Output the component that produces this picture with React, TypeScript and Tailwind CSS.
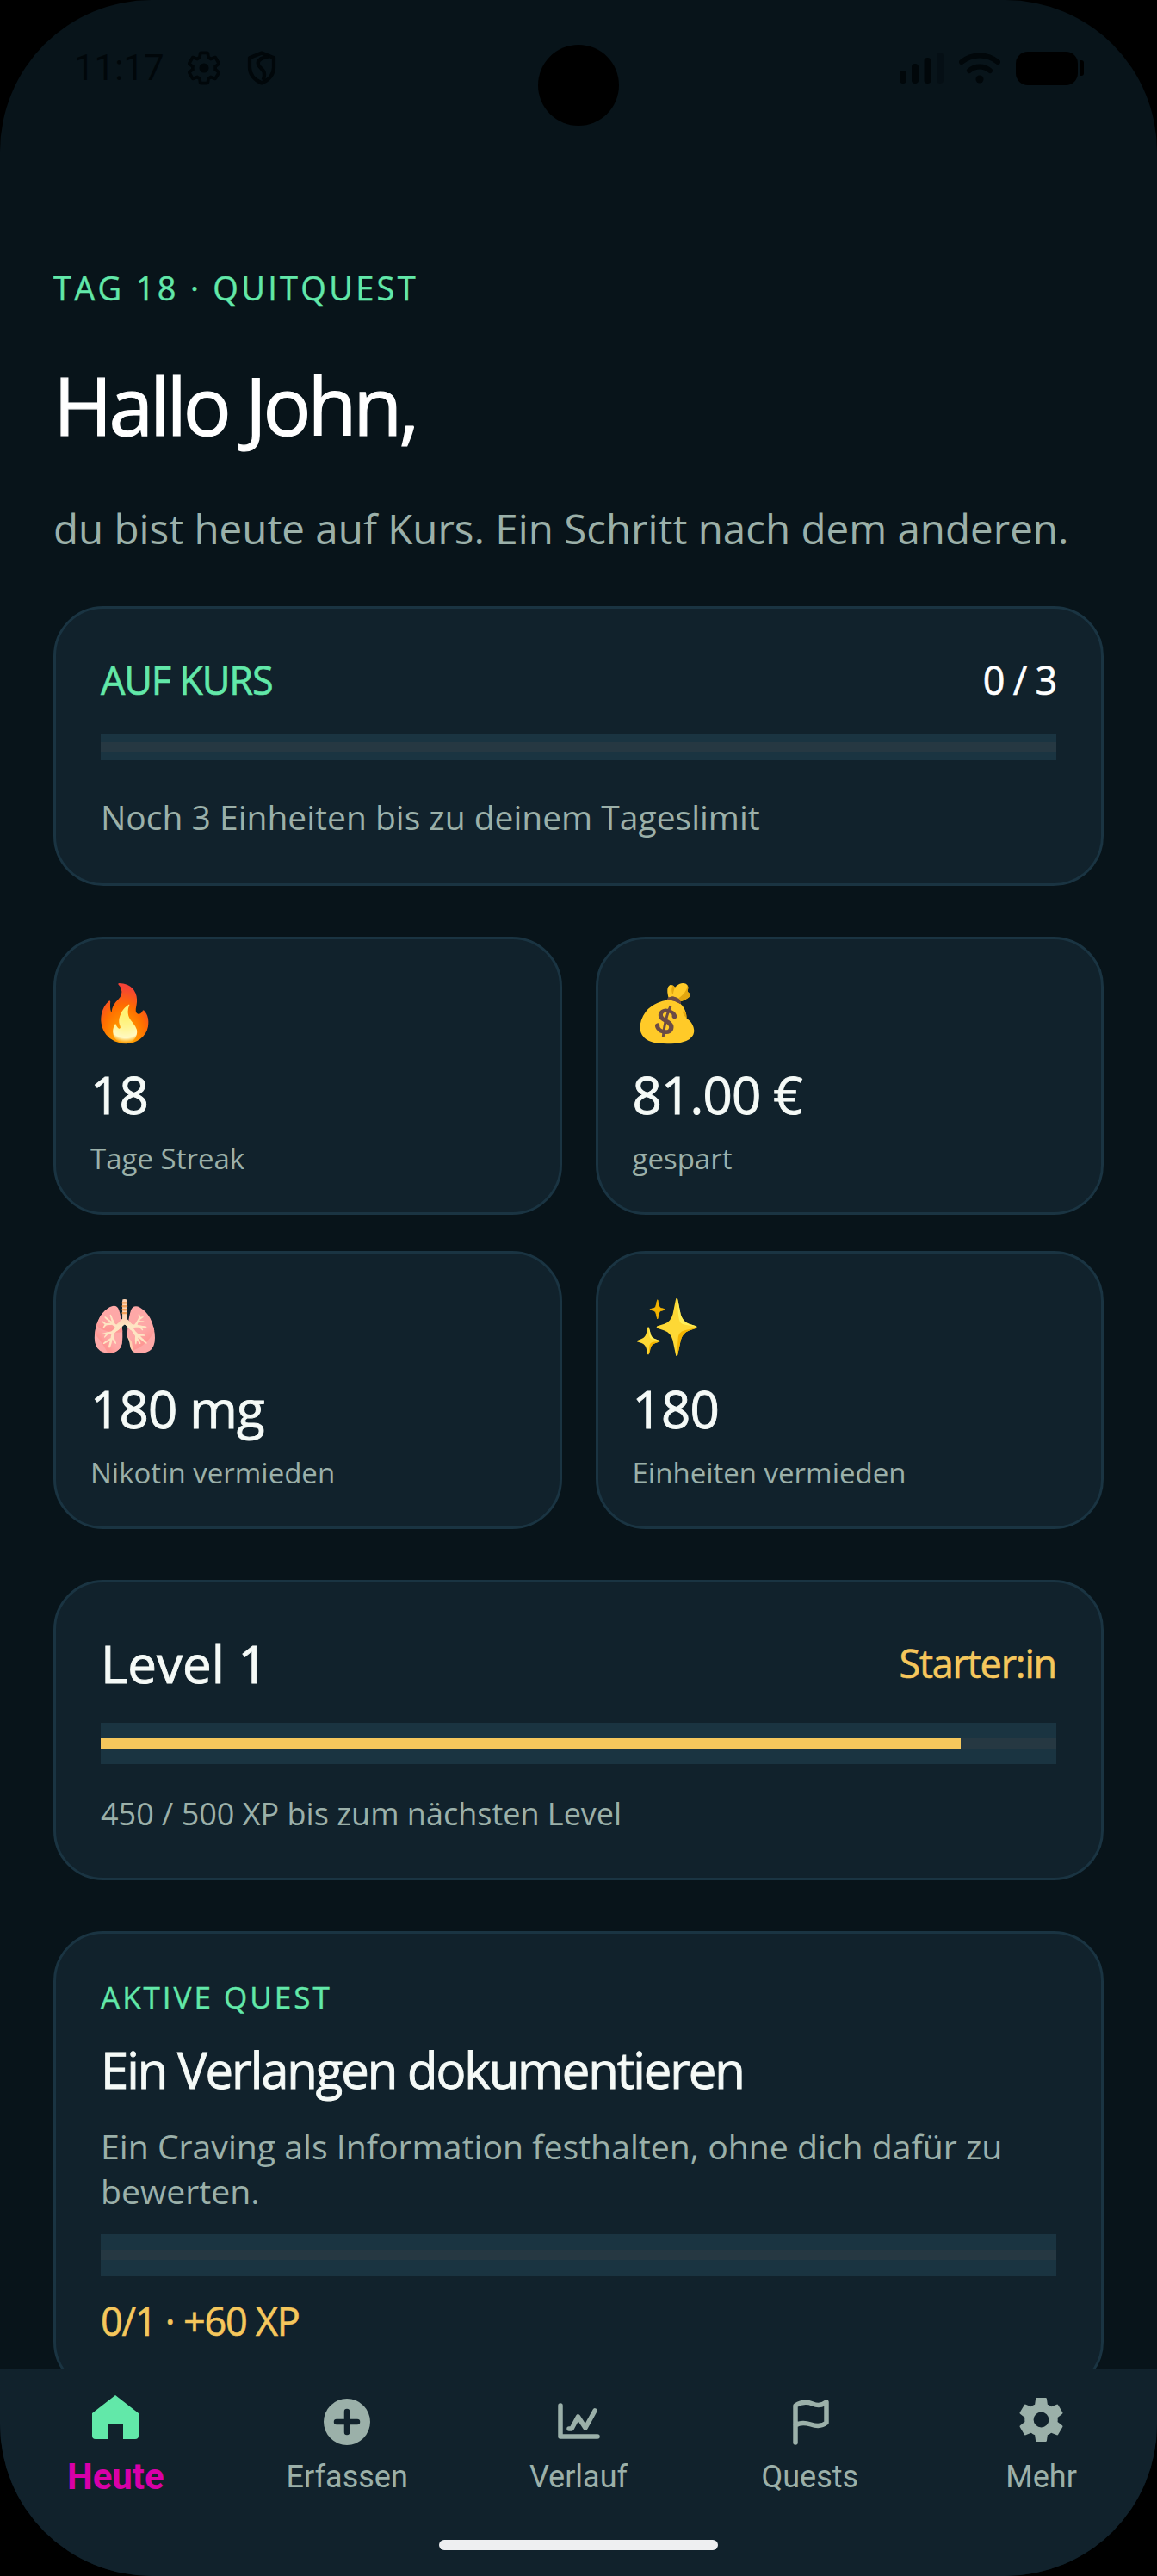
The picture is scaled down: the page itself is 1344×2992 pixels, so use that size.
import { IoSettingsSharp } from "react-icons/io5";

const sans = "font-['Open_Sans','Noto_Sans',sans-serif]";

function Card({ className, children }: { className: string; children: React.ReactNode }) {
  return (
    <div className={`rounded-[58px] border-[3px] border-[#1a3442] bg-[#11222c] ${className}`}>
      {children}
    </div>
  );
}

function Bar({ className, fill, fillClass }: { className: string; fill: number; fillClass: string }) {
  return (
    <div className={`flex items-center bg-[#1a3441] ${className}`}>
      <div className="h-[12px] w-full bg-[#263842]">
        <div className={`h-full ${fillClass}`} style={{ width: `${fill}%` }} />
      </div>
    </div>
  );
}

function Stat({ icon, value, label }: { icon: string; value: string; label: string }) {
  return (
    <Card className="h-[323px] pl-[40px] pt-[42px]">
      <div className="h-[84px] text-[64px] leading-[84px]">{icon}</div>
      <div className="mt-[14px] text-[60px] font-medium leading-[80px] tracking-[-0.800px] text-[#f5faf7] [-webkit-text-stroke:0.9px_currentColor]">{value}</div>
      <div className="mt-[12px] text-[33px] leading-[46px] text-[#9bb0a9]">{label}</div>
    </Card>
  );
}

function StatusBar() {
  return (
    <div className="flex h-[160px] items-start justify-between pl-[86px] pr-[85px] pt-[54px]">
      <div className="flex h-[50px] items-center gap-[24px]">
        <span className="font-['Roboto',sans-serif] text-[42px] leading-[50px] text-[#01070a]">11:17</span>
        <svg viewBox="0 0 24 24" className="h-[44px] w-[44px]" fill="none" stroke="#01070a" strokeWidth="2">
          <path d="M19.140 12.940c.04-.3.06-.61.06-.94 0-.32-.02-.64-.07-.94l2.030-1.580c.18-.14.23-.41.12-.61l-1.920-3.320c-.12-.22-.37-.29-.59-.22l-2.390.96c-.5-.38-1.030-.7-1.620-.94l-.36-2.540c-.04-.24-.24-.41-.48-.41h-3.840c-.24 0-.43.17-.47.41l-.36 2.540c-.59.24-1.130.57-1.620.94l-2.390-.96c-.22-.08-.47 0-.59.22L2.740 8.870c-.12.21-.08.47.12.61l2.030 1.580c-.05.3-.09.63-.09.94s.02.64.07.94l-2.030 1.580c-.18.14-.23.41-.12.61l1.920 3.320c.12.22.37.29.59.22l2.390-.96c.5.38 1.030.7 1.620.94l.36 2.540c.05.24.24.41.48.41h3.840c.24 0 .44-.17.47-.41l.36-2.540c.59-.24 1.130-.56 1.620-.94l2.390.96c.22.08.47 0 .59-.22l1.920-3.320c.12-.22.07-.47-.12-.61z" />
          <circle cx="12" cy="12" r="3" fill="#01070a" stroke="none" />
        </svg>
        <svg viewBox="0 0 24 24" className="h-[42px] w-[42px]" fill="none" stroke="#01070a" strokeWidth="2.400" strokeLinejoin="round">
          <path d="M12 2l8 3.200v6.300c0 4.800-3.300 8.300-8 10.500-4.700-2.200-8-5.700-8-10.500V5.200z" />
          <path d="M16.500 5C11 4.500 8 8 10.500 11c2 2.500 4.500 3 2.500 9" />
        </svg>
      </div>
      <div className="flex h-[50px] items-center gap-[18px]">
        <svg viewBox="0 0 51 37" className="h-[37px] w-[51px]" fill="#01070a">
          <rect x="0" y="21" width="8" height="15" rx="4" />
          <rect x="14" y="13" width="8" height="23" rx="4" />
          <rect x="28.500" y="6" width="8" height="30" rx="4" />
          <rect x="43" y="0" width="8" height="36" rx="4" fillOpacity="0.3" />
        </svg>
        <svg viewBox="0 0 48 37" className="h-[37px] w-[48px]" fill="none" stroke="#01070a" strokeWidth="6" strokeLinecap="round">
          <path d="M3 11C15 1 33 1 45 11" />
          <path d="M12 21C19 15 29 15 36 21" />
          <circle cx="24" cy="31" r="4.500" fill="#01070a" stroke="none" />
        </svg>
        <div className="flex items-center gap-[3px]">
          <div className="h-[39px] w-[72px] rounded-[14px] bg-black" />
          <div className="h-[18px] w-[4px] rounded-r-[3px] bg-black" />
        </div>
      </div>
    </div>
  );
}

function NavItem({ icon, label, active }: { icon: React.ReactNode; label: string; active?: boolean }) {
  return (
    <div className="flex flex-1 flex-col items-center">
      <div className="flex h-[66px] w-[66px] items-center justify-center">{icon}</div>
      <span
        className={`mt-[7px] font-['Roboto',sans-serif] leading-[48px] ${
          active ? "text-[42px] font-bold text-[#d800a8]" : "text-[36px] text-[#9bb0a9]"
        }`}
      >
        {label}
      </span>
    </div>
  );
}

function BottomNav() {
  return (
    <div className="absolute inset-x-0 bottom-0 h-[240px] bg-[#11222c] pt-[28px]">
      <div className="flex">
        <NavItem
          active
          label="Heute"
          icon={
            <svg viewBox="0 0 66 66" className="h-[66px] w-[66px]" fill="#62e8a9">
              <path d="M33 2L60 23V49Q60 53 56 53H42V35H24V53H10Q6 53 6 49V23Z" />
            </svg>
          }
        />
        <NavItem
          label="Erfassen"
          icon={
            <svg viewBox="0 0 54 54" className="h-[54px] w-[54px]">
              <circle cx="27" cy="27" r="27" fill="#9bb0a9" />
              <path d="M27 15V39M15 27H39" stroke="#11222c" strokeWidth="6.500" strokeLinecap="round" />
            </svg>
          }
        />
        <NavItem
          label="Verlauf"
          icon={
            <svg viewBox="0 0 66 66" className="h-[66px] w-[66px]" fill="none" stroke="#9bb0a9" strokeWidth="5.500" strokeLinecap="round" strokeLinejoin="round">
              <path d="M12 14V50H55" />
              <path d="M22 41L25 41L32.500 27L41 40L52 20" />
            </svg>
          }
        />
        <NavItem
          label="Quests"
          icon={
            <svg viewBox="0 0 66 66" className="h-[66px] w-[66px]" fill="none" stroke="#9bb0a9" strokeWidth="5.500" strokeLinecap="round" strokeLinejoin="round">
              <path d="M16 57V14C24 9 31 10 36 12S47 14 52 10V34C46 39 40 38 34 36S22 33 16 37" />
            </svg>
          }
        />
        <NavItem label="Mehr" icon={<IoSettingsSharp className="h-[57px] w-[57px] -translate-y-[3px] text-[#9bb0a9]" />} />
      </div>
      <div className="absolute bottom-[30px] left-[510px] h-[12px] w-[324px] rounded-[6px] bg-[#eeeff1]" />
    </div>
  );
}

export default function App() {
  return (
    <div className="min-h-[2992px] bg-black">
      <div className={`relative h-[2992px] overflow-hidden rounded-[176px] bg-[#08141a] ${sans}`}>
        <div className="absolute left-[625px] top-[52px] h-[94px] w-[94px] rounded-full bg-black" />
        <StatusBar />

        <div className="px-[62px]">
          <div className="mt-[149px] text-[38px] font-medium leading-[50px] tracking-[3.300px] text-[#62e8a9] [-webkit-text-stroke:0.4px_currentColor]">
            TAG 18 · QUITQUEST
          </div>
          <h1 className="mt-[53px] text-[93px] font-medium leading-[116px] tracking-[-4.100px] text-white [-webkit-text-stroke:1.2px_currentColor]">Hallo John,</h1>
          <p className="mt-[54px] text-[47.500px] leading-[64px] text-[#9bb0a9]">
            du bist heute auf Kurs. Ein Schritt nach dem anderen.
          </p>

          <Card className="mt-[58px] h-[325px] px-[52px] pt-[54px]">
            <div className="flex items-center justify-between">
              <span className="text-[45px] font-medium leading-[58px] tracking-[-1.200px] text-[#62e8a9] [-webkit-text-stroke:0.6px_currentColor]">AUF KURS</span>
              <span className="text-[45px] font-medium leading-[58px] tracking-[-1.200px] text-white [-webkit-text-stroke:0.6px_currentColor]">0 / 3</span>
            </div>
            <Bar className="mt-[34px] h-[30px]" fill={0} fillClass="bg-[#62e8a9]" />
            <p className="mt-[39px] text-[39px] leading-[54px] text-[#9bb0a9]">Noch 3 Einheiten bis zu deinem Tageslimit</p>
          </Card>

          <div className="mt-[59px] grid grid-cols-2 gap-x-[39px] gap-y-[42px]">
            <Stat icon="🔥" value="18" label="Tage Streak" />
            <Stat icon="💰" value="81.00 €" label="gespart" />
            <Stat icon="🫁" value="180 mg" label="Nikotin vermieden" />
            <Stat icon="✨" value="180" label="Einheiten vermieden" />
          </div>

          <Card className="mt-[59px] h-[349px] px-[52px] pt-[54px]">
            <div className="flex items-center justify-between">
              <span className="text-[60px] font-medium leading-[80px] text-[#f5faf7] [-webkit-text-stroke:0.9px_currentColor]">Level 1</span>
              <span className="text-[45px] font-medium leading-[58px] tracking-[-1.200px] text-[#f5c75c] [-webkit-text-stroke:0.6px_currentColor]">Starter:in</span>
            </div>
            <Bar className="mt-[29px] h-[48px]" fill={90} fillClass="bg-[#f5c75c]" />
            <p className="mt-[33px] text-[36px] leading-[50px] text-[#9bb0a9]">450 / 500 XP bis zum nächsten Level</p>
          </Card>

          <Card className="mt-[59px] h-[535px] px-[52px] pt-[50px]">
            <div className="text-[35px] font-medium leading-[48px] tracking-[3px] text-[#62e8a9] [-webkit-text-stroke:0.4px_currentColor]">AKTIVE QUEST</div>
            <h2 className="mt-[22px] text-[58px] font-medium leading-[76px] tracking-[-2.100px] text-[#f5faf7] [-webkit-text-stroke:0.9px_currentColor]">Ein Verlangen dokumentieren</h2>
            <p className="mt-[25px] text-[39.200px] leading-[52px] text-[#9bb0a9]">
              Ein Craving als Information festhalten, ohne dich dafür zu bewerten.
            </p>
            <Bar className="mt-[24px] h-[48px]" fill={0} fillClass="bg-[#f5c75c]" />
            <div className="mt-[24px] text-[45px] font-medium leading-[58px] tracking-[-1.200px] text-[#f5c75c] [-webkit-text-stroke:0.6px_currentColor]">0/1 · +60 XP</div>
          </Card>
        </div>

        <BottomNav />
      </div>
    </div>
  );
}
